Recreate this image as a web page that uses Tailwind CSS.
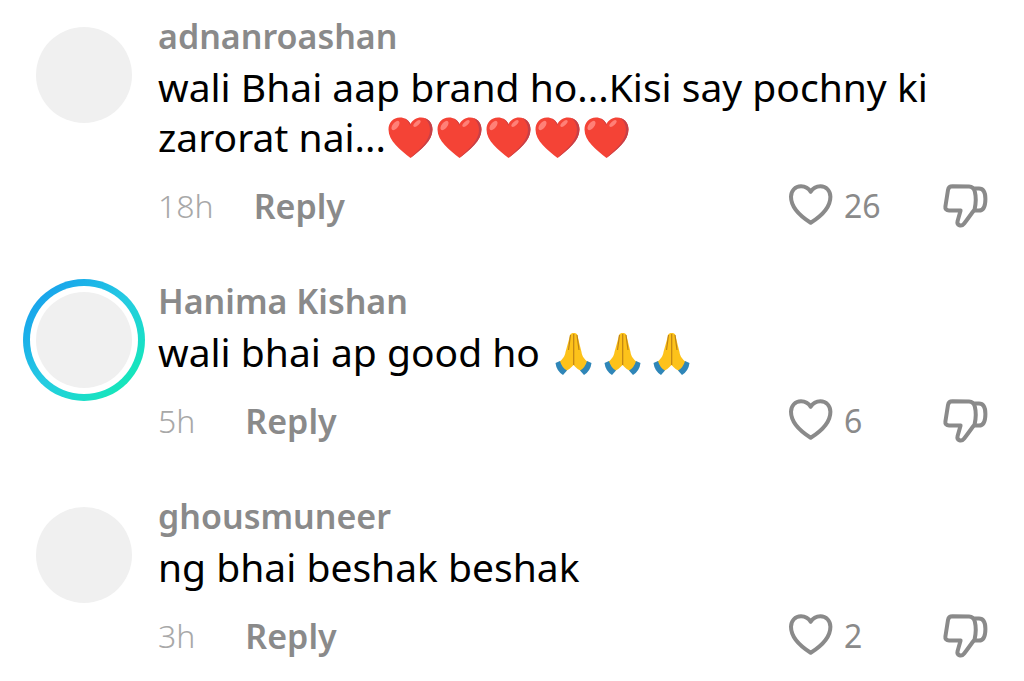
<!DOCTYPE html>
<html lang="en">
<head>
    <meta charset="UTF-8">
    <meta name="viewport" content="width=device-width, initial-scale=1.0">
    <title>Comments</title>
    <script src="https://cdn.jsdelivr.net/npm/@tailwindcss/browser@4"></script>
</head>
<body class="bg-white font-['Noto_Sans',sans-serif] text-black">
    <!-- Shared icons -->
    <svg class="hidden" aria-hidden="true">
        <symbol id="like" viewBox="0 0 46 46">
            <path d="M22.7 8.800C20.600 5.200 17 3.200 13 3.200C7.200 3.200 3 7.800 3 13.800C3 24.600 13.500 34 22.700 39.800C32 34 42.400 24.600 42.400 13.800C42.400 7.800 38.200 3.200 32.400 3.200C28.400 3.200 24.800 5.200 22.700 8.800Z" fill="none" stroke="currentColor" stroke-width="4" stroke-linejoin="round"/>
        </symbol>
        <symbol id="dislike" viewBox="0 0 46 46">
            <g fill="none" stroke="currentColor" stroke-width="4" stroke-linejoin="round" stroke-linecap="round">
                <path d="M10.500 3.200L27 3.500C30.500 3.700 32 5.500 32.800 8.500C34.200 14 34 20 32.600 26.500C29.500 30.500 26 35.500 22.200 40.500C19.500 44 14.500 42.500 15.600 38L18.600 27.500H7C4.500 27.500 3 26 3.400 23.500L6 7C6.400 4.500 7.800 3.200 10.500 3.200Z"/>
                <path d="M32.800 5.500H37C41.500 5.500 43.400 9.500 43.400 16C43.400 23.500 41.500 27.600 37 27.600H33"/>
            </g>
        </symbol>
        <symbol id="red-heart" viewBox="0 0 49 46">
            <path d="M24.5 8C22.5 4 18.500 1.500 14 1.500C7 1.500 2.500 6.500 2.500 13.500C2.500 25 14.500 34 24.500 42C34.500 34 46.500 25 46.500 13.500C46.500 6.500 42 1.500 35 1.500C30.500 1.500 26.500 4 24.500 8Z" fill="#f44336"/>
            <path d="M38.500 2C43 6 45 11 43.500 18C41 28 31 35 24.500 42C34.500 34 46.500 25 46.500 13.500C46.500 8 43.500 3.500 38.500 2ZM18 2.300C21 3.800 23 6.500 24.500 10V8C23 5 21 3.200 18 2.300Z" fill="#c64048"/>
            <ellipse cx="9.500" cy="9.500" rx="2.800" ry="5.500" transform="rotate(38 9.500 9.500)" fill="#ff8077"/>
            <ellipse cx="31" cy="7.500" rx="2" ry="4.500" transform="rotate(48 31 7.500)" fill="#ff8077"/>
        </symbol>
        <symbol id="folded-hands" viewBox="0 0 49 46">
            <path d="M20.500 3C22 1.500 25.500 1.500 27 3L31.500 21C32 25 34 28 39 32L33 41C29 39 26 37 23.500 34C21 37 18 39 14 41L8 32C13 28 15 25 15.500 21Z" fill="#fdc21a"/>
            <path d="M23.700 3V34M20.500 4L18.500 19M27 4L29 19" fill="none" stroke="#bf8417" stroke-width="1.200"/>
            <path d="M5.500 32L10 30Q12 37 17 39.500L13 44Q6.500 40 5.500 32ZM41.500 32L37 30Q35 37 30 39.500L34 44Q40.500 40 41.500 32Z" fill="#2f86b8"/>
        </symbol>
    </svg>

    <main class="flex flex-col gap-[49px] pt-3.5 pr-9 pl-[23px]">
        <article class="flex gap-[13px]">
            <div class="flex size-[122px] shrink-0 items-center justify-center">
                <div class="size-24 rounded-full bg-[#f0f0f0]"></div>
            </div>
            <div class="min-w-0 flex-1">
                <h2 class="text-[34px] leading-[44px] font-semibold text-[#8a8a8a]">adnanroashan</h2>
                <p class="mt-1 text-[39px] leading-[50px]">wali Bhai aap brand ho...Kisi say pochny ki zarorat nai...<span class="inline-flex align-bottom" role="img" aria-label="Five red hearts"><svg class="h-[46px] w-[49px]"><use href="#red-heart"/></svg><svg class="h-[46px] w-[49px]"><use href="#red-heart"/></svg><svg class="h-[46px] w-[49px]"><use href="#red-heart"/></svg><svg class="h-[46px] w-[49px]"><use href="#red-heart"/></svg><svg class="h-[46px] w-[49px]"><use href="#red-heart"/></svg></span></p>
                <div class="mt-5 flex h-12 items-center text-[32px]">
                    <time class="font-light text-[#a8a8a8]">18h</time>
                    <button class="ml-10 text-[34px] font-semibold text-[#8a8a8a]">Reply</button>
                    <button class="ml-auto flex w-[154px] items-center gap-2.5 text-[#8a8a8a]" aria-label="Like, 26"><svg class="size-[46px]"><use href="#like"/></svg>26</button>
                    <button class="text-[#8a8a8a]" aria-label="Dislike"><svg class="size-[46px]"><use href="#dislike"/></svg></button>
                </div>
            </div>
        </article>
        <article class="flex gap-[13px]">
            <div class="flex size-[122px] shrink-0 items-center justify-center rounded-full bg-linear-to-br from-[#1a94ee] via-[#25cbe2] to-[#14f0a8] p-[7px]">
                <div class="flex size-full items-center justify-center rounded-full bg-white">
                    <div class="size-24 rounded-full bg-[#f0f0f0]"></div>
                </div>
            </div>
            <div class="min-w-0 flex-1">
                <h2 class="text-[34px] leading-[44px] font-semibold text-[#8a8a8a]">Hanima Kishan</h2>
                <p class="mt-1 text-[39px] leading-[50px]">wali bhai ap good ho <span class="inline-flex align-bottom" role="img" aria-label="Three folded hands"><svg class="h-[46px] w-[49px]"><use href="#folded-hands"/></svg><svg class="h-[46px] w-[49px]"><use href="#folded-hands"/></svg><svg class="h-[46px] w-[49px]"><use href="#folded-hands"/></svg></span></p>
                <div class="mt-5 flex h-12 items-center text-[32px]">
                    <time class="font-light text-[#a8a8a8]">5h</time>
                    <button class="ml-[50px] text-[34px] font-semibold text-[#8a8a8a]">Reply</button>
                    <button class="ml-auto flex w-[154px] items-center gap-2.5 text-[#8a8a8a]" aria-label="Like, 6"><svg class="size-[46px]"><use href="#like"/></svg>6</button>
                    <button class="text-[#8a8a8a]" aria-label="Dislike"><svg class="size-[46px]"><use href="#dislike"/></svg></button>
                </div>
            </div>
        </article>
        <article class="flex gap-[13px]">
            <div class="flex size-[122px] shrink-0 items-center justify-center">
                <div class="size-24 rounded-full bg-[#f0f0f0]"></div>
            </div>
            <div class="min-w-0 flex-1">
                <h2 class="text-[34px] leading-[44px] font-semibold text-[#8a8a8a]">ghousmuneer</h2>
                <p class="mt-1 text-[39px] leading-[50px]">ng bhai beshak beshak</p>
                <div class="mt-5 flex h-12 items-center text-[32px]">
                    <time class="font-light text-[#a8a8a8]">3h</time>
                    <button class="ml-[50px] text-[34px] font-semibold text-[#8a8a8a]">Reply</button>
                    <button class="ml-auto flex w-[154px] items-center gap-2.5 text-[#8a8a8a]" aria-label="Like, 2"><svg class="size-[46px]"><use href="#like"/></svg>2</button>
                    <button class="text-[#8a8a8a]" aria-label="Dislike"><svg class="size-[46px]"><use href="#dislike"/></svg></button>
                </div>
            </div>
        </article>
    </main>
</body>
</html>
